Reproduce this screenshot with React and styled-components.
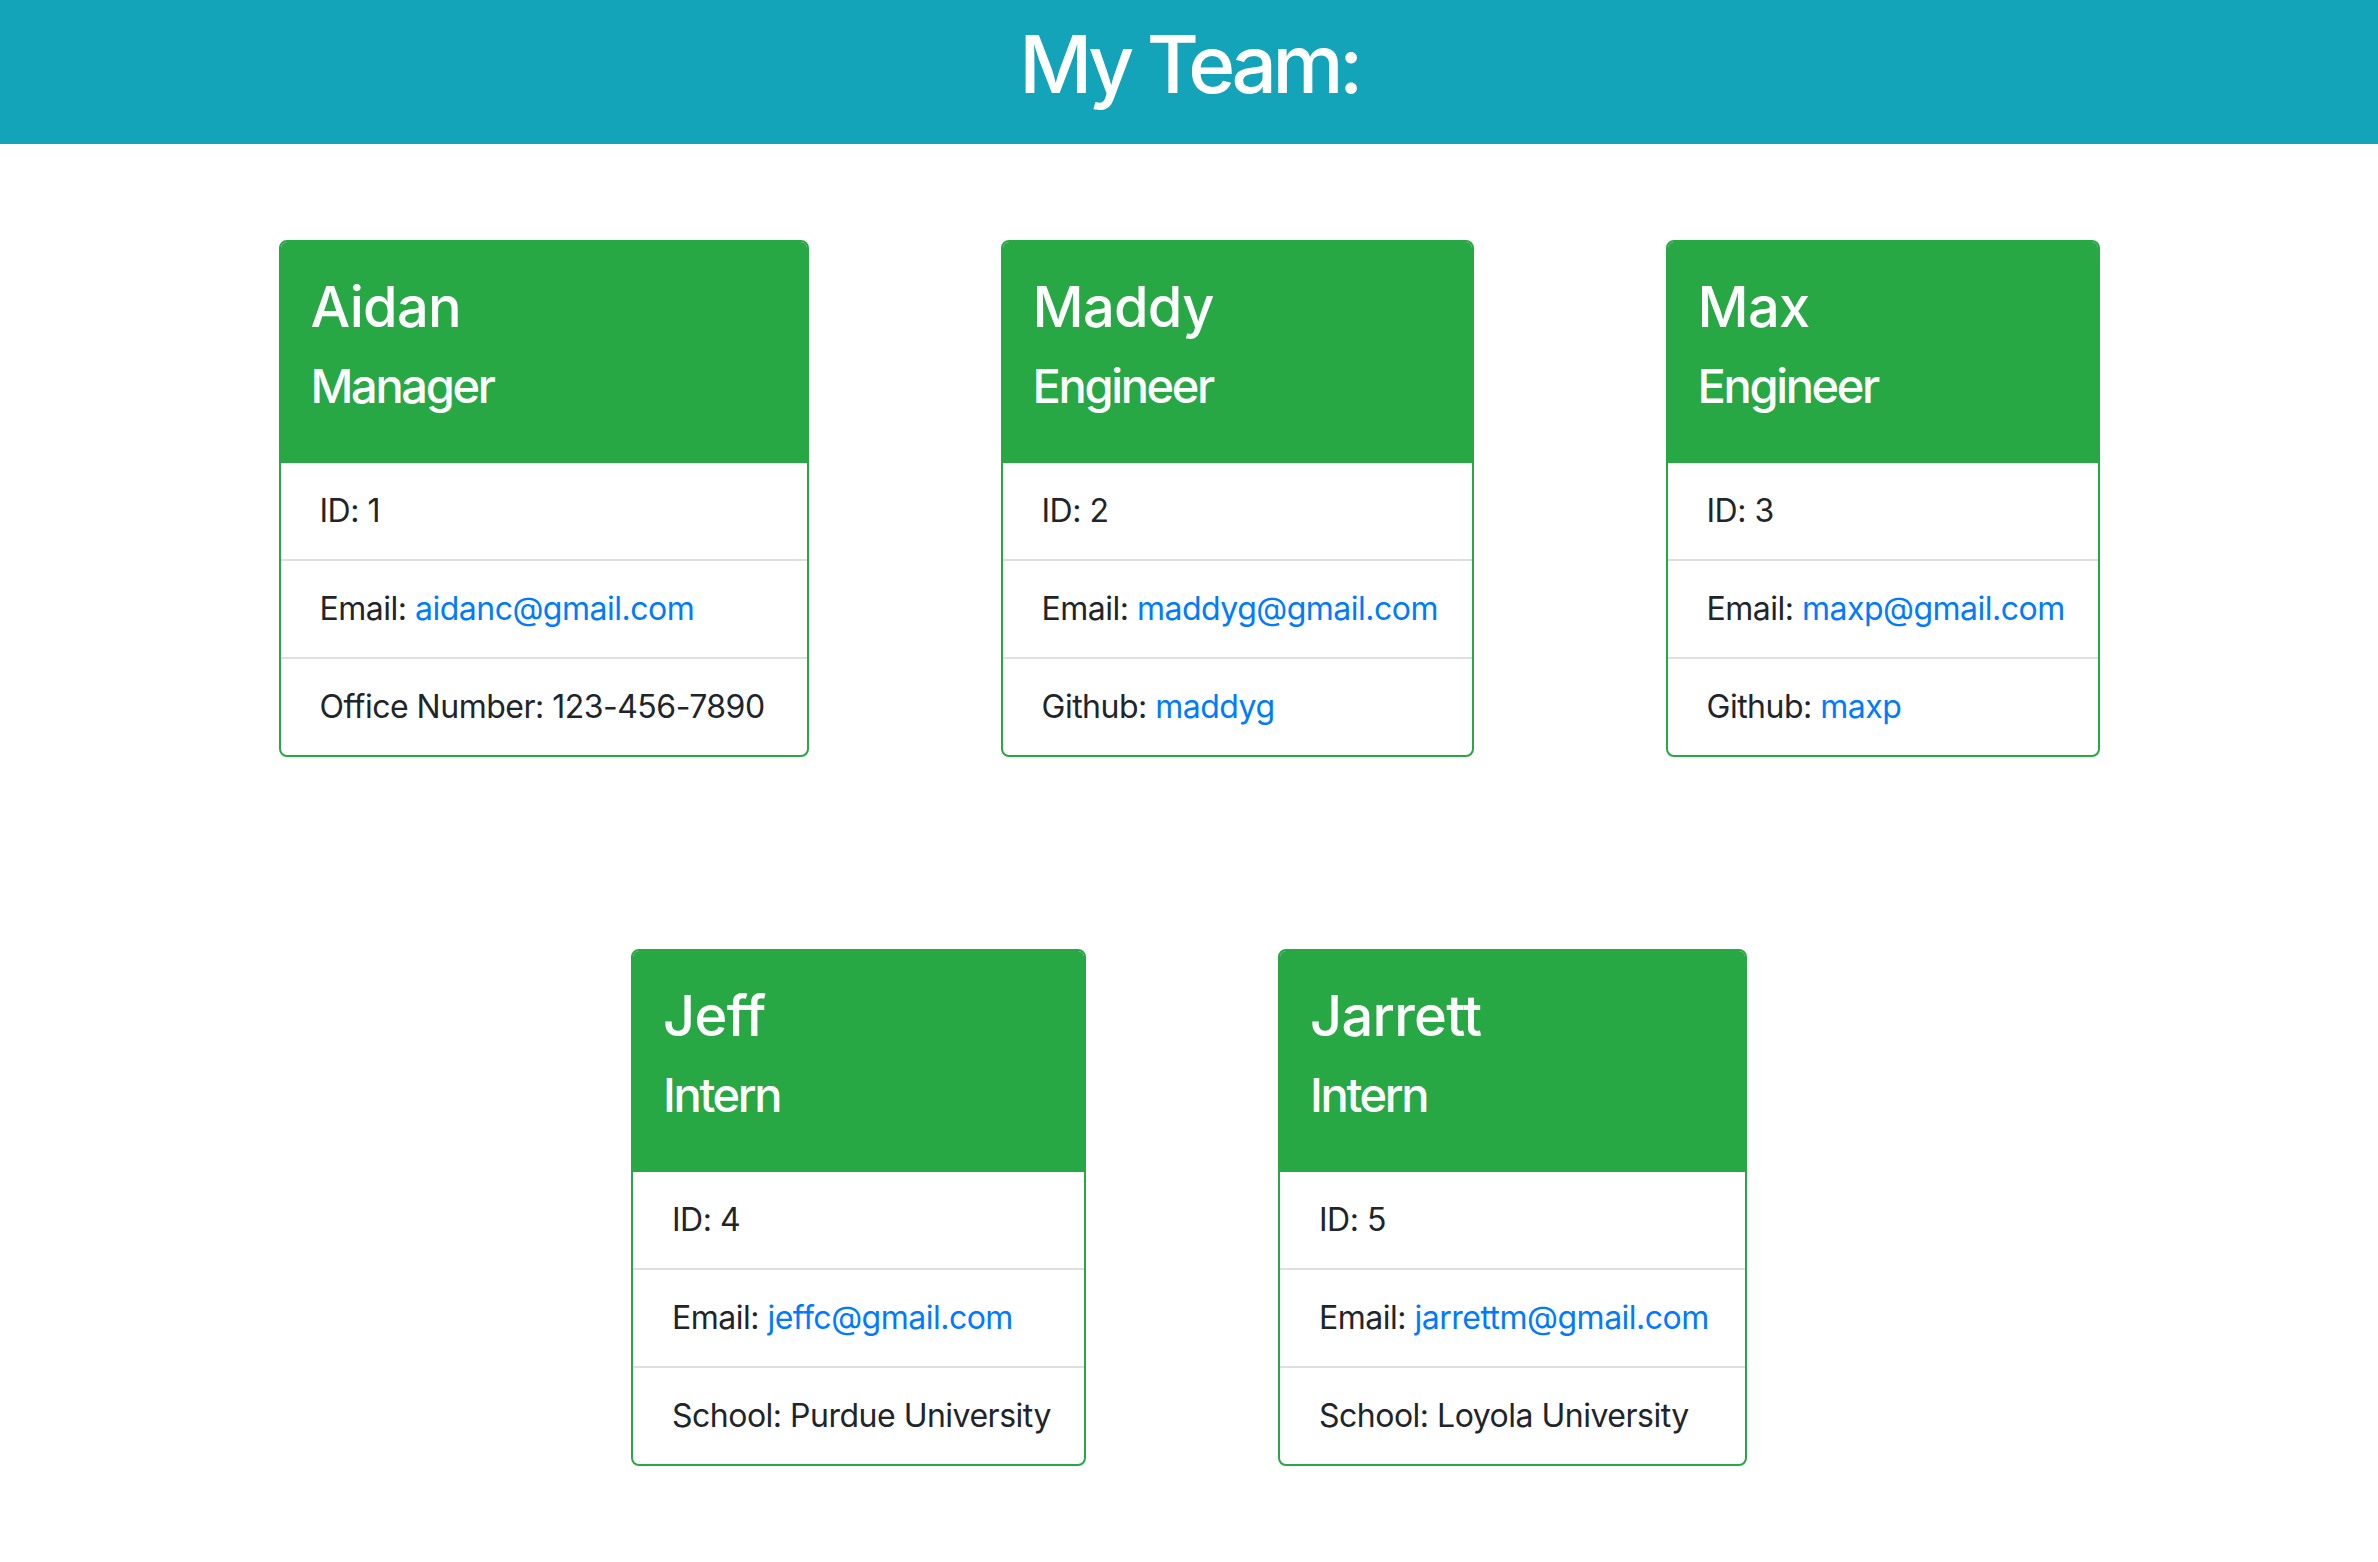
import React from 'react';
import styled, { createGlobalStyle } from 'styled-components';

const GlobalStyle = createGlobalStyle`
  body {
    margin: 0;
    background: #fff;
    color: #212529;
    font-family: Inter, "Noto Sans", "Liberation Sans", sans-serif;
  }
`;

const Header = styled.header`
  background: #13a4b9;
  padding: 16px 0;
  text-align: center;
`;

const Title = styled.h1`
  margin: 0 0 16px;
  font-size: 80px;
  font-weight: 500;
  line-height: 1.2;
  letter-spacing: -4.5px;
  color: #fff;
`;

const CardGrid = styled.main`
  display: flex;
  flex-wrap: wrap;
  justify-content: center;
`;

const Card = styled.section`
  flex: 0 0 auto;
  box-sizing: border-box;
  width: ${(p) => p.$width}px;
  min-width: 0;
  margin: 96px;
  border: 2px solid #28a745;
  border-radius: 8px;
  overflow: hidden;
  background: #fff;
`;

const CardHeader = styled.div`
  background: #28a745;
  color: #fff;
  padding: 32px 32px 32px 30px;
  letter-spacing: -0.045em;
`;

const Name = styled.h3`
  margin: 0 0 16px;
  font-size: 56px;
  font-weight: 500;
  line-height: 1.2;
`;

const Role = styled.h4`
  margin: 0 0 16px;
  font-size: 47px;
  font-weight: 500;
  line-height: 57.6px;
  letter-spacing: -0.05em;
`;

const InfoList = styled.ul`
  list-style: none;
  margin: 0;
  padding: 0;
`;

const InfoItem = styled.li`
  padding: 24px 39px;
  font-size: 32px;
  line-height: 48px;
  letter-spacing: -0.5px;
  white-space: nowrap;
  border-bottom: 2px solid rgba(0, 0, 0, 0.125);

  &:last-child {
    border-bottom: 0;
  }
`;

const Link = styled.a`
  color: #007bff;
  text-decoration: none;
`;

const team = [
  { name: 'Aidan', role: 'Manager', id: 1, email: 'aidanc@gmail.com', extra: { label: 'Office Number', value: '123-456-7890' }, width: 530 },
  { name: 'Maddy', role: 'Engineer', id: 2, email: 'maddyg@gmail.com', extra: { label: 'Github', value: 'maddyg', link: true }, width: 473 },
  { name: 'Max', role: 'Engineer', id: 3, email: 'maxp@gmail.com', extra: { label: 'Github', value: 'maxp', link: true }, width: 434 },
  { name: 'Jeff', role: 'Intern', id: 4, email: 'jeffc@gmail.com', extra: { label: 'School', value: 'Purdue University' }, width: 455 },
  { name: 'Jarrett', role: 'Intern', id: 5, email: 'jarrettm@gmail.com', extra: { label: 'School', value: 'Loyola University' }, width: 469 },
];

function EmployeeCard({ member }) {
  const { name, role, id, email, extra, width } = member;
  return (
    <Card $width={width}>
      <CardHeader>
        <Name>{name}</Name>
        <Role>{role}</Role>
      </CardHeader>
      <InfoList>
        <InfoItem>ID: {id}</InfoItem>
        <InfoItem>
          Email: <Link href={`mailto:${email}`}>{email}</Link>
        </InfoItem>
        <InfoItem>
          {extra.label}:{' '}
          {extra.link ? (
            <Link href={`https://github.com/${extra.value}`}>{extra.value}</Link>
          ) : (
            extra.value
          )}
        </InfoItem>
      </InfoList>
    </Card>
  );
}

export default function App() {
  return (
    <>
      <GlobalStyle />
      <Header>
        <Title>My Team:</Title>
      </Header>
      <CardGrid>
        {team.map((m) => (
          <EmployeeCard key={m.id} member={m} />
        ))}
      </CardGrid>
    </>
  );
}
